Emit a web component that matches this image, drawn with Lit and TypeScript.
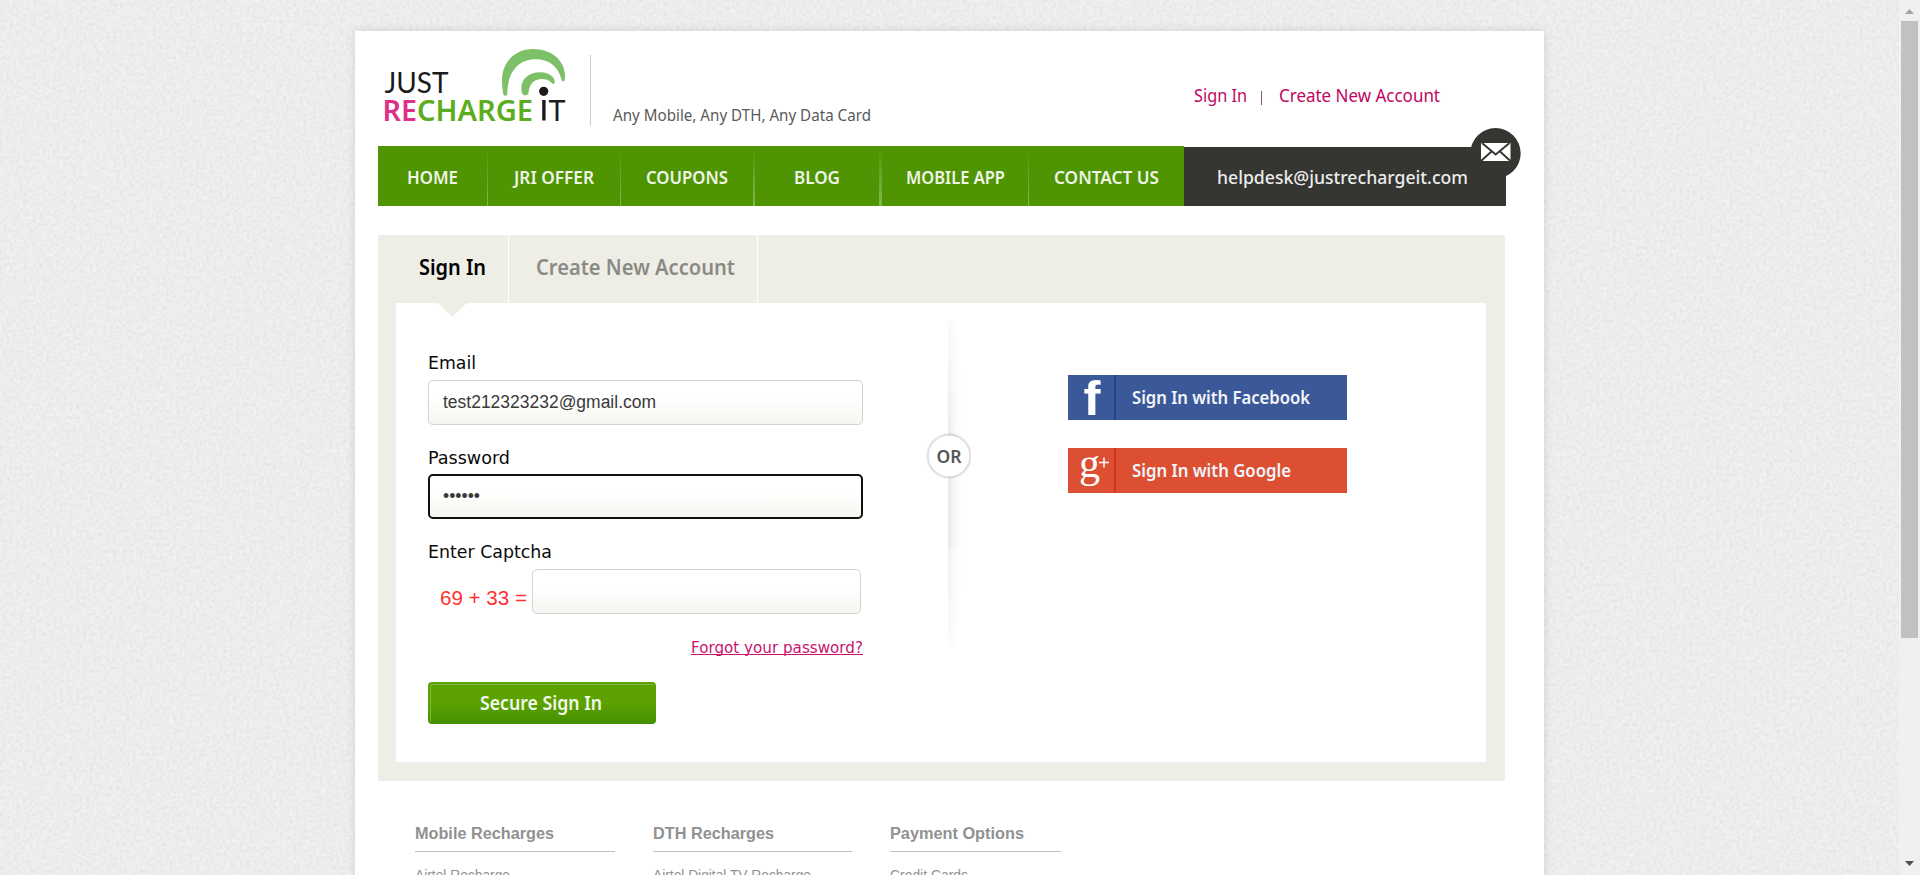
import { LitElement, html, css } from "lit";
import { customElement } from "lit/decorators.js";

/** One line of text set to an exact advance width, with its baseline at `base` in a box `h` high. */
const line = (text: string, w: number, h: number, base: number, cls = "") => html`
  <svg class="line ${cls}" width=${w} height=${h} viewBox="0 0 ${w} ${h}">
    <text x="0" y=${base} textLength=${w} lengthAdjust="spacingAndGlyphs">${text}</text>
  </svg>`;

const NAV = [
  { label: "HOME", text: 51, cell: 109, rule: 1 },
  { label: "JRI OFFER", text: 80, cell: 132, rule: 1 },
  { label: "COUPONS", text: 82, cell: 132, rule: 2 },
  { label: "BLOG", text: 46, cell: 124, rule: 3 },
  { label: "MOBILE APP", text: 99, cell: 146, rule: 1 },
  { label: "CONTACT US", text: 105, cell: 155, rule: 0 },
];

const FOOT = [
  { title: "Mobile Recharges", tw: 139, w: 200, link: "Airtel Recharge", lw: 95 },
  { title: "DTH Recharges", tw: 121, w: 199, link: "Airtel Digital TV Recharge", lw: 158 },
  { title: "Payment Options", tw: 134, w: 171, link: "Credit Cards", lw: 78 },
];

@customElement("site-header")
export class SiteHeader extends LitElement {
  static styles = css`
    :host { display: block; height: 175px; }
    .line { display: block; overflow: visible; }
    .top { display: flex; height: 115px; }
    .logo { display: block; margin: 9px 0 0 2px; }
    .rule { width: 1px; height: 71px; margin: 24px 22px 0 10px; background: #cdcdcd; }
    .tag { font: 16px "Noto Sans", sans-serif; fill: #5a5a5a; }
    .tagbox { padding-top: 70px; }
    .account { display: flex; margin: 52px 0 0 323px; }
    .account a { text-decoration: none; }
    .acc { font: 18px "Noto Sans", sans-serif; fill: #c0055f; }
    .bar { width: 1px; height: 14px; margin: 8px 17px 0 14px; background: #8a5a50; }
    nav { display: flex; width: 1128px; height: 60px; position: relative; }
    .item { display: flex; justify-content: center; background: #4f9403; }
    .sep { background: linear-gradient(#4f9403, #86b553); }
    .menu { font: 600 17.3px "Noto Sans", sans-serif; fill: #eef5e6; }
    .desk { width: 316px; padding-right: 6px; height: 59px; margin-top: 1px; display: flex; justify-content: center; background: #353532; }
    .help { font: 500 17.5px "Noto Sans", sans-serif; fill: #ececec; }
    .mail { position: absolute; right: -15px; top: -18px; }
    .t1 { font: 28.5px Lato, sans-serif; }
    .t2 { font: 600 29px "Noto Sans", sans-serif; }
  `;
  render() {
    return html`
      <div class="top">
        <svg class="logo" width="200" height="90" viewBox="0 0 200 90">
          <path fill="#7cc068" d="M123.500 55C122.400 50 122 45 122 40.500C122 22 135 9 153 9C171 9 185 20 185 36C185 38.500 184.800 40 184.300 41C183.500 42 182 41.500 181.500 39.500C178 26 169 19.300 155 19.300C139 19.300 127 32 127.300 54.500C126.500 56 124.500 56 123.500 55Z"/>
          <path fill="#7cc068" d="M143 54.500C141.500 52.500 141.200 50 141.400 47C142 38 150 32.300 160 32.300C169 32.300 174.700 37 174.800 42.500C174.500 44.300 173 44.300 171.500 42.700C169 40 165.500 39 161 39C153 39.500 149 45 148.600 53C147.800 55.500 144.300 56 143 54.500Z"/>
          <text class="t1" x="4.500" y="52.700" textLength="64" lengthAdjust="spacingAndGlyphs" fill="#1b1b1b">JUST</text>
          <text class="t2" x="2.500" y="80.500" textLength="34.500" lengthAdjust="spacingAndGlyphs" fill="#dd3088">RE</text>
          <text class="t2" x="37" y="80.500" textLength="116" lengthAdjust="spacingAndGlyphs" fill="#5bad1e">CHARGE</text>
          <rect x="162.200" y="60" width="3.400" height="20.500" fill="#1b1b1b"/>
          <circle cx="163.700" cy="51.300" r="4.600" fill="#1b1b1b"/>
          <text class="t1" x="168.500" y="80.500" textLength="17" lengthAdjust="spacingAndGlyphs" fill="#1b1b1b">T</text>
        </svg>
        <div class="rule"></div>
        <div class="tagbox">${line("Any Mobile, Any DTH, Any Data Card", 258, 30, 20, "tag")}</div>
        <div class="account">
          <a>${line("Sign In", 53, 30, 19, "acc")}</a>
          <span class="bar"></span>
          <a>${line("Create New Account", 161, 30, 19, "acc")}</a>
        </div>
      </div>
      <nav>
        ${NAV.map((n) => html`
          <a class="item" style="width:${n.cell}px">${line(n.label, n.text, 60, 37.9, "menu")}</a>
          ${n.rule ? html`<i class="sep" style="width:${n.rule}px"></i>` : ""}`)}
        <a class="desk">${line("helpdesk@justrechargeit.com", 251, 59, 36.9, "help")}</a>
        <svg class="mail" width="51" height="51" viewBox="0 0 51 51">
          <circle cx="25.500" cy="25.300" r="25.200" fill="#353532"/>
          <rect x="11" y="15" width="29.500" height="18" fill="#fff"/>
          <path d="M12 15L25.700 26.500L39.500 15M11 33L21.500 23.500M40.500 33L30 23.500" fill="none" stroke="#353532" stroke-width="1.900"/>
        </svg>
      </nav>`;
  }
}

@customElement("sign-in-panel")
export class SignInPanel extends LitElement {
  static styles = css`
    :host { display: block; box-sizing: border-box; width: 1127px; height: 546px; padding: 0 19px 19px 18px; background: #efeee6; }
    .line { display: block; overflow: visible; }
    .tabs { display: flex; height: 68px; }
    .tab { box-sizing: border-box; border-right: 1px solid #fff; height: 68px; position: relative; }
    .first { width: 113px; padding-left: 23px; }
    .second { width: 249px; padding-left: 27px; }
    .tt { font: 600 21.700px "Noto Sans", sans-serif; fill: #000; }
    .dim { fill: #8b8b86; }
    .tip { position: absolute; left: 42px; top: 67px; }
    .body { display: flex; background: #fff; height: 459px; }
    form { width: 435px; padding: 48px 0 0 32px; }
    .lab { font: 17.500px "DejaVu Sans", sans-serif; fill: #0a0a0a; }
    .field { box-sizing: border-box; height: 45px; border: 1px solid #d2d2d2; border-radius: 5px; background: linear-gradient(#fff 40%, #f5f5f0); padding-left: 14px; }
    .focus { border: 2px solid #101010; padding-left: 13px; }
    .val { font: 17.600px "Liberation Sans", sans-serif; fill: #3a3a3a; }
    .group { height: 94px; }
    .captcha { height: 78px; }
    .group .lab { margin-bottom: 4px; }
    .row { display: flex; }
    .row .field { width: 329px; }
    .row .cap { font: 20px "Liberation Sans", sans-serif; fill: #ff3030; margin: 0 5px 0 12px; }
    .forgot { display: flex; justify-content: flex-end; margin-top: 19px; }
    .fg { font: 15.400px "DejaVu Sans", sans-serif; fill: #c9136f; }
    .underline { border-bottom: 1px solid #c9136f; height: 18px; margin-bottom: 2px; }
    .btn { display: flex; justify-content: center; box-sizing: border-box; width: 228px; height: 42px; margin-top: 25px; padding-right: 3px; border-radius: 4px; background: linear-gradient(#5ba200 50%, #448f02); border: 2px solid transparent; background-origin: border-box; box-shadow: inset 1px 1px 0 #7fb83a; }
    .bt { font: 600 18.800px "Noto Sans", sans-serif; fill: #f2f8ea; }
    .or { display: block; width: 46px; margin-left: 62px; }
    .social { margin: 72px 0 0 97px; }
    .soc { display: flex; width: 279px; height: 45px; margin-bottom: 28px; }
    .fb { background: #3b5998; }
    .gg { background: #dc4f33; }
    .ic { display: block; overflow: visible; }
    .st { font: 600 17px "Noto Sans", sans-serif; fill: #f3f4fa; margin-left: 15px; }
    .ort { font: 600 17.500px "Noto Sans", sans-serif; fill: #555; }
    .f { font: 700 48px "Liberation Sans", sans-serif; }
    .g { font: 39.500px "Liberation Serif", serif; }
  `;
  render() {
    return html`
      <div class="tabs">
        <div class="tab first">${line("Sign In", 67, 68, 40, "tt")}
          <svg class="tip" width="29" height="15" viewBox="0 0 29 15"><path d="M0 0H29V1L14.500 15L0 1Z" fill="#efeee6"/></svg>
        </div>
        <div class="tab second">${line("Create New Account", 199, 68, 40, "tt dim")}</div>
      </div>
      <div class="body">
        <form>
          <div class="group">${line("Email", 48, 25, 18, "lab")}
            <div class="field">${line("test212323232@gmail.com", 213, 43, 27, "val")}</div>
          </div>
          <div class="group">${line("Password", 82, 25, 18.5, "lab")}
            <div class="field focus">${line("••••••", 37, 41, 26, "val")}</div>
          </div>
          <div class="group captcha">${line("Enter Captcha", 124, 26, 19, "lab")}
            <div class="row">${line("69 + 33 =", 87, 45, 35.500, "cap")}<div class="field"></div></div>
          </div>
          <div class="forgot"><a class="underline">${line("Forgot your password?", 172, 18, 16.5, "fg")}</a></div>
          <a class="btn">${line("Secure Sign In", 122, 38, 26, "bt")}</a>
        </form>
        <svg class="or" width="46" height="459" viewBox="0 0 46 459">
          <defs>
            <linearGradient id="side"><stop stop-color="#000" stop-opacity=".09"/><stop offset=".5" stop-color="#000" stop-opacity=".03"/><stop offset="1" stop-color="#000" stop-opacity="0"/></linearGradient>
            <linearGradient id="fade" x2="0" y2="1"><stop stop-color="#333"/><stop offset=".4" stop-color="#fff"/><stop offset=".69" stop-color="#fff"/><stop offset=".7" stop-color="#aaa"/><stop offset="1" stop-color="#333"/></linearGradient>
            <mask id="m"><rect y="17" width="46" height="328" fill="url(#fade)"/></mask>
            <radialGradient id="halo"><stop offset=".82" stop-color="#000" stop-opacity=".24"/><stop offset="1" stop-color="#000" stop-opacity="0"/></radialGradient>
          </defs>
          <rect x="23" y="17" width="13" height="328" fill="url(#side)" mask="url(#m)"/>
          <circle cx="24" cy="153" r="23.500" fill="url(#halo)"/>
          <circle cx="24" cy="153" r="20.500" fill="#fff"/>
          <text class="ort" x="11.500" y="160" textLength="25" lengthAdjust="spacingAndGlyphs">OR</text>
        </svg>
        <div class="social">
          <a class="soc fb">
            <svg class="ic" width="49" height="45" viewBox="0 0 49 45">
              <rect x="46" width="2" height="45" fill="#1f4192"/>
              <text class="f" x="15.500" y="40" fill="#fff" textLength="17" lengthAdjust="spacingAndGlyphs">f</text>
            </svg>${line("Sign In with Facebook", 178, 45, 29, "st")}
          </a>
          <a class="soc gg">
            <svg class="ic" width="49" height="45" viewBox="0 0 49 45">
              <rect x="46" width="2" height="45" fill="#d0371f"/>
              <text class="g" x="11" y="28.500" fill="#fff" textLength="21" lengthAdjust="spacingAndGlyphs">g</text>
              <path d="M31 14.500H41M36 9.500V19.500" stroke="#fff" stroke-width="1.500"/>
            </svg>${line("Sign In with Google", 159, 45, 29, "st")}
          </a>
        </div>
      </div>`;
  }
}

@customElement("site-footer")
export class SiteFooter extends LitElement {
  static styles = css`
    :host { display: flex; gap: 38px; padding: 44px 0 0 37px; }
    .line { display: block; overflow: visible; }
    .col { flex: none; }
    .head { border-bottom: 1px solid #c0c0c0; height: 26px; margin-bottom: 14px; }
    .h { font: 700 16px "Liberation Sans", sans-serif; fill: #919191; }
    .l { font: 14px "Liberation Sans", sans-serif; fill: #919191; }
  `;
  render() {
    return html`${FOOT.map((c) => html`
      <div class="col" style="width:${c.w}px">
        <div class="head">${line(c.title, c.tw, 26, 14, "h")}</div>
        <a>${line(c.link, c.lw, 20, 14, "l")}</a>
      </div>`)}`;
  }
}

@customElement("app-root")
export class AppRoot extends LitElement {
  static styles = css`
    :host { display: flex; width: 1920px; height: 875px; overflow: hidden; background: #ededed; position: relative; }
    .grain { position: absolute; left: 0; top: 0; }
    .view { width: 1899px; height: 875px; overflow: hidden; position: relative; }
    .page { box-sizing: border-box; width: 1189px; height: 900px; margin: 31px auto 0; padding-left: 23px; background: #fff; box-shadow: 0 0 9px rgba(0, 0, 0, 0.12); }
    .page sign-in-panel { margin-top: 29px; }
    .scroll { width: 21px; background: #f0f0f0; position: relative; display: flex; flex-direction: column; align-items: center; }
    .up, .down { display: block; width: 21px; height: 21px; }
    .thumb { width: 17px; height: 617px; background: #c1c1c1; margin-bottom: auto; }
  `;
  render() {
    return html`
      <svg class="grain" width="1899" height="875">
        <filter id="n" x="0" y="0" width="100%" height="100%">
          <feTurbulence type="fractalNoise" baseFrequency=".3" numOctaves="3" seed="4"/>
          <feColorMatrix values=".12 0 0 0 .84  .12 0 0 0 .84  .12 0 0 0 .84  0 0 0 0 1" color-interpolation-filters="sRGB"/>
        </filter>
        <rect width="1899" height="875" filter="url(#n)"/>
      </svg>
      <div class="view">
        <main class="page">
          <site-header></site-header>
          <sign-in-panel></sign-in-panel>
          <site-footer></site-footer>
        </main>
      </div>
      <div class="scroll">
        <svg class="up" viewBox="0 0 21 21"><path d="M6 14L10.500 9L15 14Z" fill="#a3a3a3"/></svg>
        <div class="thumb"></div>
        <svg class="down" viewBox="0 0 21 21"><path d="M6 7L10.500 12L15 7Z" fill="#505050"/></svg>
      </div>`;
  }
}
